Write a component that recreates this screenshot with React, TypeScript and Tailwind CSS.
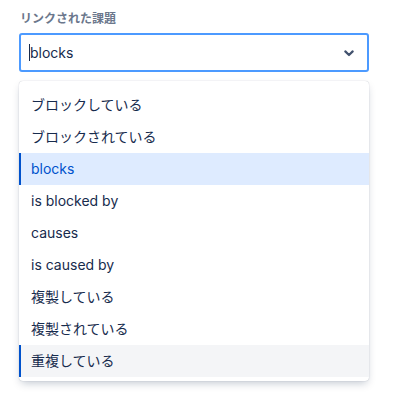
const options = [
  "ブロックしている",
  "ブロックされている",
  "blocks",
  "is blocked by",
  "causes",
  "is caused by",
  "複製している",
  "複製されている",
  "重複している",
];

export default function App() {
  const selected = "blocks";
  const hovered = "重複している";

  return (
    <div
      className="min-h-[396px] bg-white px-[19px] pt-[11px]"
      style={{ fontFamily: 'Inter, "Noto Sans CJK JP", sans-serif' }}
    >
      <label className="mb-[6px] block pl-px text-xs font-bold leading-4 text-[#6b778c]">
        リンクされた課題
      </label>
      <div className="flex h-[39px] w-[350px] items-center rounded-[3px] border-2 border-[#4c9aff] bg-white pl-2 pr-[6px]">
        <span className="h-[17px] w-px bg-[#172b4d]" />
        <span className="flex-1 text-sm text-[#172b4d]">blocks</span>
        <svg width="24" height="24" viewBox="0 0 24 24" fill="none">
          <path
            d="M8.3 10.4 L12 14 L15.7 10.4"
            stroke="#42526e"
            strokeWidth="2.2"
            strokeLinecap="round"
            strokeLinejoin="round"
          />
        </svg>
      </div>
      <ul className="mt-[9px] w-[350px] rounded-[4px] bg-white pt-2 pb-1 shadow-[0_4px_8px_-2px_rgba(9,30,66,0.25),0_0_1px_rgba(9,30,66,0.31)]">
        {options.map((opt) => {
          const isSel = opt === selected;
          const isHover = opt === hovered;
          return (
            <li
              key={opt}
              className={
                isSel
                  ? "flex h-8 items-center bg-[#deebff] pl-3 text-sm text-[#0052cc] shadow-[inset_2px_0_0_#0052cc]"
                  : isHover
                  ? "flex h-8 items-center bg-[#f4f5f7] pl-3 text-sm text-[#172b4d] shadow-[inset_2px_0_0_#0052cc]"
                  : "flex h-8 items-center pl-3 text-sm text-[#172b4d]"
              }
            >
              {opt}
            </li>
          );
        })}
      </ul>
    </div>
  );
}
